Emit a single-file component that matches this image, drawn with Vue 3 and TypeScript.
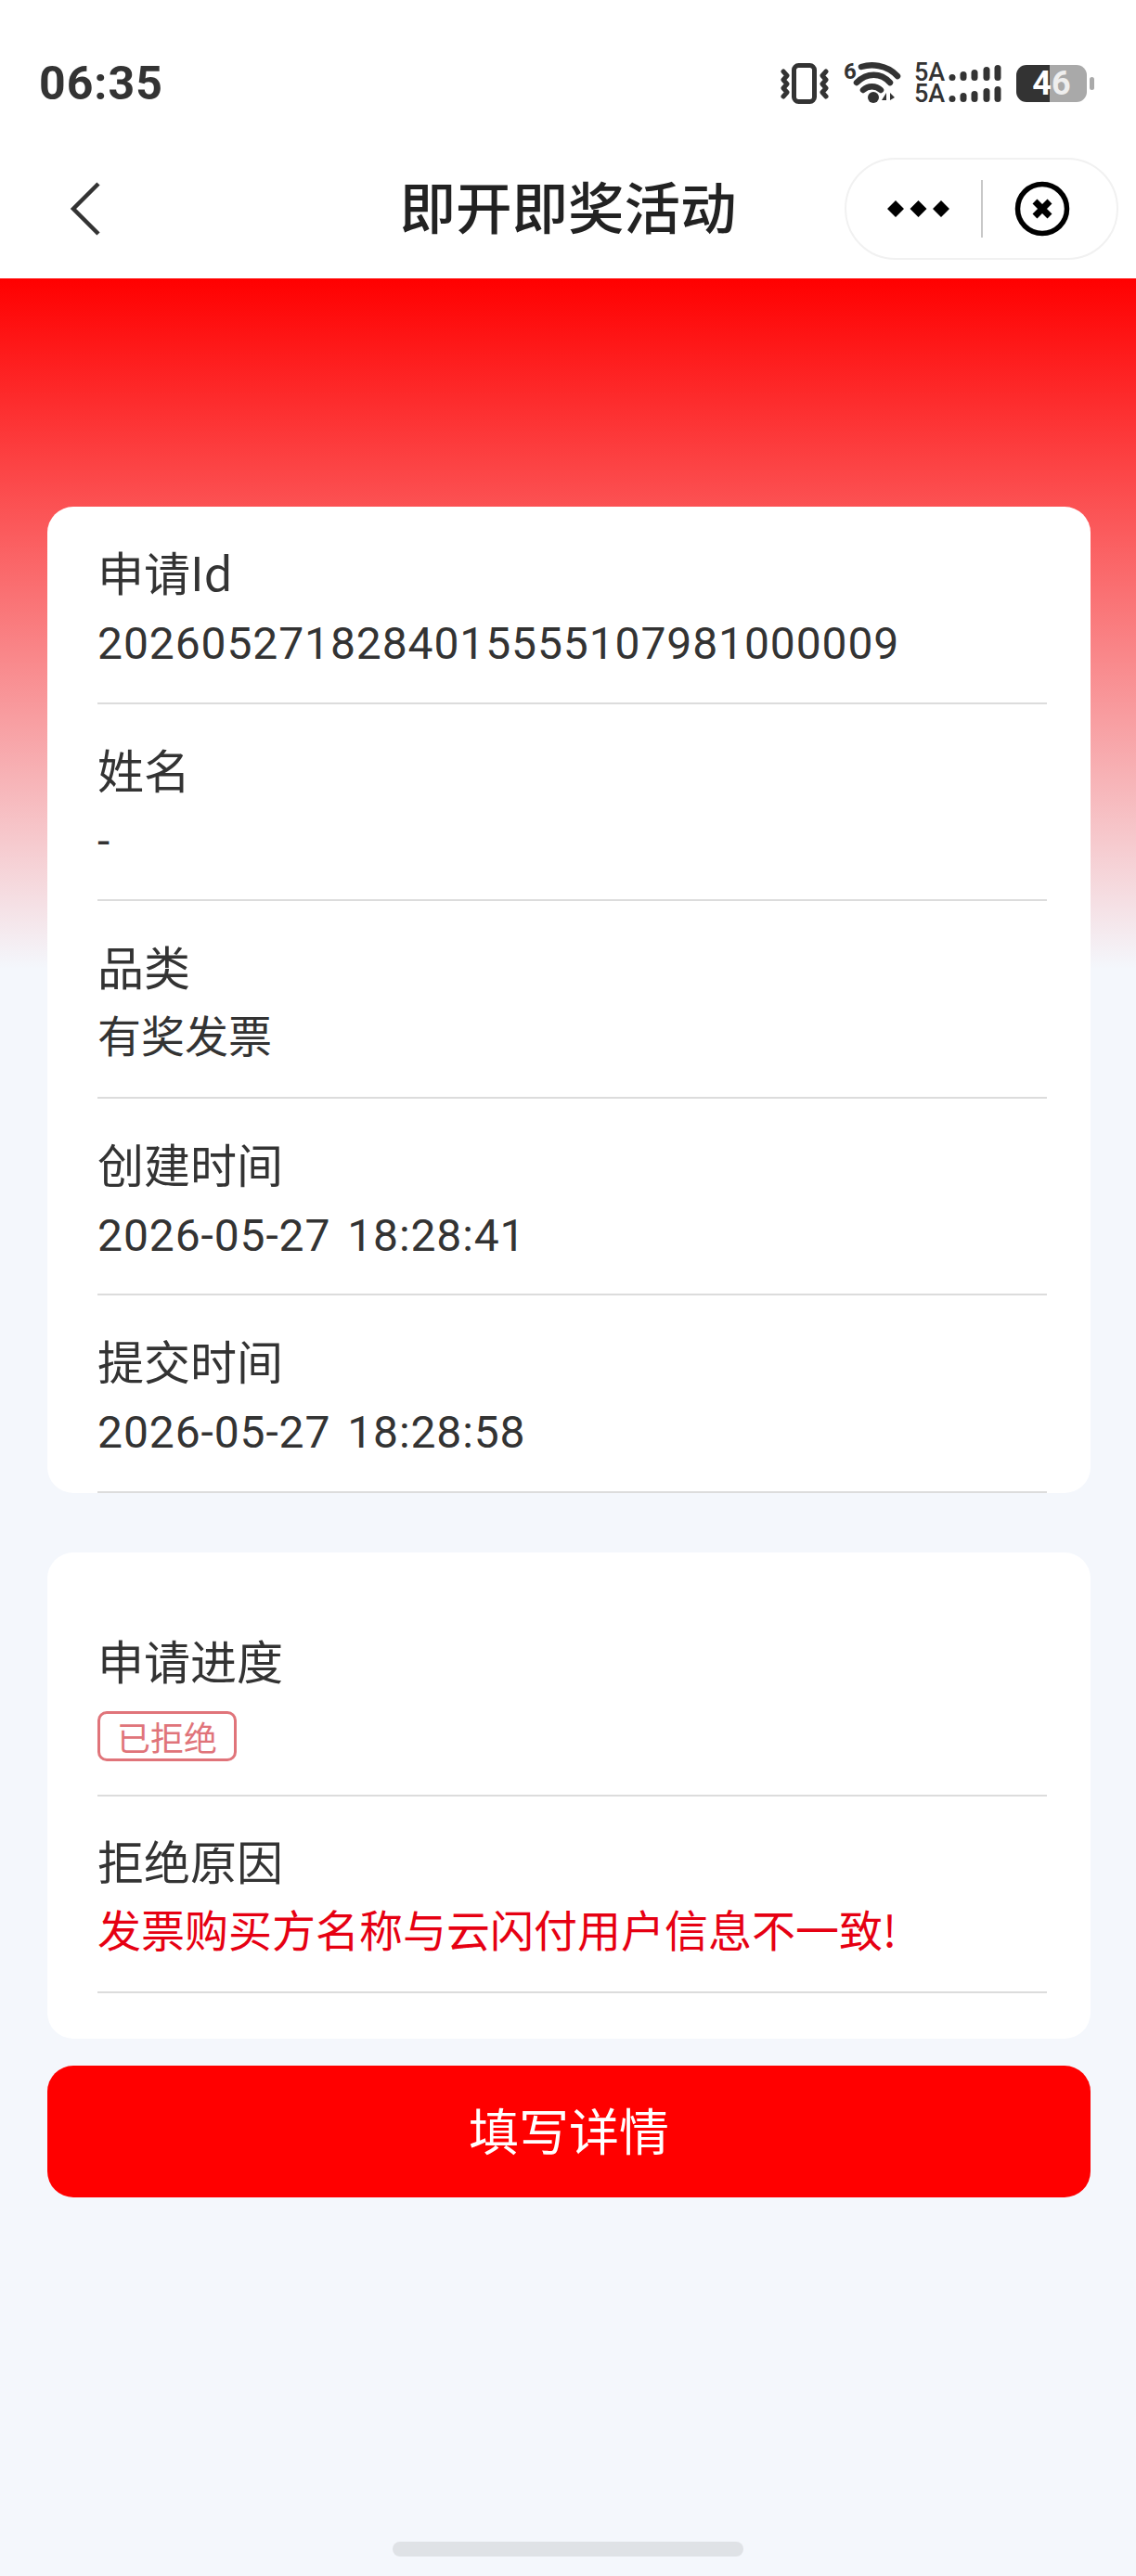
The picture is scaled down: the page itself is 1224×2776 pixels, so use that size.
<script setup lang="ts">
interface Row {
  label: string;
  value: string;
  kind?: "num" | "date";
}

const infoRows: Row[] = [
  { label: "申请Id", value: "2026052718284015555107981000009", kind: "num" },
  { label: "姓名", value: "-", kind: "num" },
  { label: "品类", value: "有奖发票" },
  { label: "创建时间", value: "2026-05-27 18:28:41", kind: "date" },
  { label: "提交时间", value: "2026-05-27 18:28:58", kind: "date" },
];

const signalBars = [
  { x: 40, h: 7 },
  { x: 52, h: 10 },
  { x: 64, h: 12 },
  { x: 77, h: 15 },
  { x: 89, h: 17 },
];
</script>

<template>
  <div class="page">
    <header class="top">
      <div class="status">
        <span class="time">06:35</span>
        <div class="status-icons">
          <svg class="ic-vibrate" width="52" height="44" viewBox="0 0 52 44" fill="none" stroke="#333">
            <rect x="14.500" y="2.500" width="22" height="39" rx="5" stroke-width="5" />
            <path d="M3 9l4 4.500-4 4.500 4 4.500-4 4.500 4 4.500-4 4.500" stroke-width="5" stroke-linejoin="round" stroke-linecap="round" />
            <path d="M49 9l-4 4.500 4 4.500-4 4.500 4 4.500-4 4.500 4 4.500" stroke-width="5" stroke-linejoin="round" stroke-linecap="round" />
          </svg>
          <svg class="ic-wifi" width="62" height="58" viewBox="0 -6 62 58" fill="none" stroke="#333" stroke-linecap="round">
            <text x="0" y="18" font-family="Roboto, sans-serif" font-size="24" font-weight="700" fill="#333" stroke="none">6</text>
            <path d="M19 5c10-3 27-3 39 10" stroke-width="6.500" />
            <path d="M14 22c11-11 26-11 36 0" stroke-width="6.500" />
            <path d="M21 30c5-5 14-5 19 0" stroke-width="6.500" />
            <circle cx="32" cy="38" r="6" fill="#333" stroke="none" />
            <path d="M46 33l-5 8h5zM48 33v10M50 33l5 5-5 3z" fill="#333" stroke="none" />
          </svg>
          <svg class="ic-signal" width="96" height="54" viewBox="0 -6 96 54">
            <g v-for="row in [18, 41]" :key="row">
              <text x="-1" :y="row" font-family="Roboto, sans-serif" font-size="27" font-weight="500" fill="#333">5A</text>
              <rect
                v-for="bar in signalBars"
                :key="bar.x"
                :x="bar.x - 3.5"
                :y="row - bar.h"
                width="7"
                :height="bar.h"
                rx="3.500"
                fill="#333"
              />
            </g>
          </svg>
          <div class="battery">
            <div class="battery-body">
              <span class="battery-num">4</span><span class="battery-num light">6</span>
            </div>
            <i class="battery-tip"></i>
          </div>
        </div>
      </div>
      <nav class="nav">
        <svg class="back" width="36" height="60" viewBox="0 0 36 60" fill="none" stroke="#333" stroke-width="4.500">
          <path d="M32 3L5 30l27 27" />
        </svg>
        <h1 class="title">即开即奖活动</h1>
        <div class="capsule">
          <svg class="more" width="67" height="20" viewBox="0 0 67 20" fill="#000">
            <path d="M9 1l9 9-9 9-9-9zM33.500 1l9 9-9 9-9-9zM58 1l9 9-9 9-9-9z" />
          </svg>
          <i class="capsule-line"></i>
          <svg class="close" width="60" height="60" viewBox="0 0 60 60" fill="none" stroke="#000">
            <circle cx="30" cy="30" r="26.500" stroke-width="5.500" />
            <path d="M22 22l16 16M38 22L22 38" stroke-width="7" />
          </svg>
        </div>
      </nav>
    </header>

    <main class="content">
      <section class="card info">
        <div v-for="row in infoRows" :key="row.label" class="row">
          <div class="label">{{ row.label }}</div>
          <div class="value" :class="row.kind">{{ row.value }}</div>
        </div>
      </section>

      <section class="card progress">
        <div class="row tag-row">
          <div class="label">申请进度</div>
          <span class="tag">已拒绝</span>
        </div>
        <div class="row">
          <div class="label">拒绝原因</div>
          <div class="value reason">发票购买方名称与云闪付用户信息不一致!</div>
        </div>
      </section>

      <button class="submit" type="button">填写详情</button>
    </main>

    <div class="home-bar"></div>
  </div>
</template>

<style>
html,
body {
  margin: 0;
  background: #f4f7fc;
}
</style>

<style scoped>
.page {
  position: relative;
  width: 1224px;
  height: 2776px;
  overflow: hidden;
  background: #f4f7fc;
  font-family: "Noto Sans CJK SC", "Noto Sans", sans-serif;
  color: #333;
}

.top {
  height: 300px;
  background: #fff;
}

.status {
  height: 150px;
  padding: 30px 45px 0 42px;
  box-sizing: border-box;
  display: flex;
  justify-content: space-between;
  align-items: center;
}

.time {
  font-family: Roboto, sans-serif;
  font-size: 50px;
  font-weight: 700;
  letter-spacing: 1px;
  color: #333;
}

.status-icons {
  display: flex;
  align-items: center;
}

.ic-wifi {
  margin-left: 16px;
}

.ic-signal {
  margin-left: 15px;
}

.battery {
  margin-left: 13px;
  display: flex;
  align-items: center;
  gap: 3px;
}

.battery-body {
  width: 76px;
  height: 40px;
  border-radius: 11px;
  background: linear-gradient(90deg, #333 36px, #a9a9a9 36px);
  display: flex;
  justify-content: center;
  align-items: center;
  font-family: Roboto, sans-serif;
  font-size: 36px;
  font-weight: 700;
  color: #fff;
  line-height: 40px;
}

.battery-num.light {
  color: #eee;
}

.battery-tip {
  width: 5px;
  height: 14px;
  border-radius: 3px;
  background: #aaa;
}

.nav {
  height: 150px;
  display: grid;
  grid-template-columns: 1fr auto 1fr;
  align-items: center;
}

.back {
  margin-left: 74px;
}

.title {
  margin: 0 0 7px;
  font-size: 60.5px;
  font-weight: 500;
  line-height: 1;
  color: #222;
}

.capsule {
  justify-self: end;
  margin-right: 19px;
  width: 295px;
  height: 110px;
  box-sizing: border-box;
  border: 2px solid #f1f1f1;
  border-radius: 55px;
  display: flex;
  align-items: center;
  padding-left: 44px;
}

.capsule-line {
  width: 2px;
  height: 62px;
  margin-left: 34px;
  background: #c8c8c8;
}

.close {
  margin-left: 34px;
}

.content {
  min-height: 2476px;
  box-sizing: border-box;
  padding: 246px 49px 0 51px;
  background: linear-gradient(#ff0000, #f4f7fc) no-repeat;
  background-size: 100% 744px;
}

.card {
  background: #fff;
  border-radius: 28px;
  padding-left: 54px;
  padding-right: 47px;
}

.row {
  height: 212px;
  box-sizing: border-box;
  border-bottom: 2px solid #dcdcdc;
  padding-top: 33px;
}

.label {
  font-size: 50px;
  line-height: 72px;
  color: #333;
}

.value {
  margin-top: 2px;
  font-family: "Noto Sans CJK SC", sans-serif;
  font-size: 47px;
  line-height: 72px;
  color: #333;
}

.value.num,
.value.date {
  margin-top: 7px;
  font-family: Roboto, "Noto Sans CJK SC", sans-serif;
  font-size: 48px;
  letter-spacing: 0.9px;
}

.value.date {
  word-spacing: 5px;
}

.info {
  height: 1063px;
  box-sizing: border-box;
}

.info .row {
  height: 212.5px;
}

.progress {
  margin-top: 64px;
  height: 524px;
  padding-top: 51px;
  box-sizing: border-box;
}

.progress .row {
  padding-top: 32px;
}

.progress .tag-row {
  padding-top: 28px;
}

.tag {
  display: block;
  width: fit-content;
  box-sizing: border-box;
  height: 54px;
  margin-top: 20px;
  line-height: 48px;
  padding: 0 18px;
  border: 3px solid #e0747a;
  border-radius: 10px;
  font-size: 36px;
  color: #e0747a;
}

.value.reason {
  margin-top: 2px;
  color: #e60012;
}

.submit {
  display: block;
  width: 1124px;
  height: 142px;
  margin-top: 29px;
  padding: 0 0 6px;
  border: 0;
  border-radius: 28px;
  background: #ff0000;
  color: #fff;
  font-family: "Noto Sans CJK SC", sans-serif;
  font-size: 54px;
}

.home-bar {
  position: absolute;
  left: 423px;
  bottom: 21px;
  width: 378px;
  height: 16px;
  border-radius: 8px;
  background: #dfe2e6;
}
</style>
